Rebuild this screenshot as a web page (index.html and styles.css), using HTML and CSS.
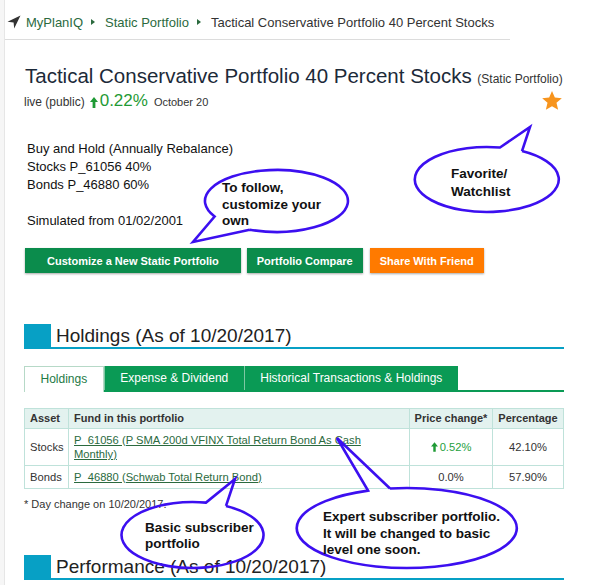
FILE: index.html
```html
<!DOCTYPE html>
<html lang="en">
<head>
<meta charset="utf-8">
<title>Tactical Conservative Portfolio 40 Percent Stocks</title>
<link rel="stylesheet" href="styles.css">
</head>
<body>
<div class="page">
  <nav class="crumbs">
    <svg class="crumb-icon" width="14" height="14" viewBox="0 0 14 14"><polygon points="13.5,0.5 0.5,6.8 6.6,7.4 7.2,13.5" fill="#333"/></svg>
    <a class="crumb-link" href="#">MyPlanIQ</a>
    <span class="sep"></span>
    <a class="crumb-link" href="#">Static Portfolio</a>
    <span class="sep"></span>
    <span class="crumb-current">Tactical Conservative Portfolio 40 Percent Stocks</span>
  </nav>

  <main class="content">
    <header class="title-block">
      <h1 class="title">Tactical Conservative Portfolio 40 Percent Stocks <small class="title-kind">(Static Portfolio)</small></h1>
      <div class="subline">
        <div class="meta">
          <span class="status">live (public)</span>
          <svg class="up-arrow" width="8" height="11" viewBox="0 0 8 11"><path d="M4 0 L8 5 H5.4 V11 H2.6 V5 H0 Z" fill="#1f9a35"/></svg>
          <span class="gain">0.22%</span>
          <span class="date">October 20</span>
        </div>
        <svg class="star" width="22" height="22" viewBox="0 0 24 24"><path d="M12 1.2l3.1 7 7.6.7-5.8 5.1 1.8 7.5L12 17.6l-6.7 3.9 1.8-7.5-5.8-5.1 7.6-.7z" fill="#f7941d"/></svg>
      </div>
    </header>

    <div class="summary">
      <p>Buy and Hold (Annually Rebalance)<br>Stocks P_61056 40%<br>Bonds P_46880 60%</p>
      <p class="simulated">Simulated from 01/02/2001</p>
    </div>

    <div class="actions">
      <button class="btn btn-green btn-customize">Customize a New Static Portfolio</button>
      <button class="btn btn-green btn-compare">Portfolio Compare</button>
      <button class="btn btn-orange btn-share">Share With Friend</button>
    </div>

    <section class="section holdings">
      <h2 class="sec-head"><span class="sec-sq"></span><span class="sec-title">Holdings (As of 10/20/2017)</span></h2>
      <div class="tabs">
        <span class="tab tab-active">Holdings</span>
        <span class="tab">Expense &amp; Dividend</span>
        <span class="tab">Historical Transactions &amp; Holdings</span>
      </div>
      <table class="hold-table">
        <colgroup><col class="c-asset"><col class="c-fund"><col class="c-price"><col class="c-pct"></colgroup>
        <thead>
          <tr><th class="left">Asset</th><th class="left">Fund in this portfolio</th><th>Price change*</th><th>Percentage</th></tr>
        </thead>
        <tbody>
          <tr>
            <td>Stocks</td>
            <td class="fund"><a href="#">P_61056 (P SMA 200d VFINX Total Return Bond As Cash Monthly)</a></td>
            <td class="num up"><svg class="small-arrow" width="7" height="10" viewBox="0 0 8 11"><path d="M4 0 L8 5 H5.4 V11 H2.6 V5 H0 Z" fill="#1f9a35"/></svg>0.52%</td>
            <td class="num">42.10%</td>
          </tr>
          <tr>
            <td>Bonds</td>
            <td class="fund"><a href="#">P_46880 (Schwab Total Return Bond)</a></td>
            <td class="num">0.0%</td>
            <td class="num">57.90%</td>
          </tr>
        </tbody>
      </table>
      <p class="footnote">* Day change on 10/20/2017.</p>
    </section>

    <section class="section performance">
      <h2 class="sec-head"><span class="sec-sq"></span><span class="sec-title">Performance (As of 10/20/2017)</span></h2>
    </section>
  </main>
</div>

<svg class="annotations" width="602" height="585" viewBox="0 0 602 585">
  <g class="bubble">
    <path d="M249.7 229.7 L193 242 L214.6 216.5 A71.5 31 0 1 1 249.7 229.7"/>
    <path d="M522 151.1 L530 127 L500 147.5 A72 32.5 0 1 0 522 151.1"/>
    <path d="M390 488.5 L337 438 L368 490.6 A110 40 0 1 0 390 488.5"/>
    <path d="M226 505.9 L235 479 L206 502.6 A71 33 0 1 0 226 505.9"/>
  </g>
  <g class="bubble-text">
    <text x="222" y="192">To follow,</text>
    <text x="222" y="208.5">customize your</text>
    <text x="222" y="225">own</text>
    <text x="451" y="178">Favorite/</text>
    <text x="451" y="196">Watchlist</text>
    <text x="323" y="521">Expert subscriber portfolio.</text>
    <text x="323" y="538">It will be changed to basic</text>
    <text x="323" y="554">level one soon.</text>
    <text x="145" y="532">Basic subscriber</text>
    <text x="145" y="548">portfolio</text>
  </g>
</svg>
</body>
</html>
```

FILE: styles.css
```css
html, body {
  margin: 0;
  padding: 0;
}

body {
  background: #f6f6f6;
  font-family: "Liberation Sans", Arial, sans-serif;
  color: #333;
  overflow: hidden;
  position: relative;
}

.page {
  margin-left: 4px;
  background: #fff;
  border-left: 1px solid #e6e6e6;
  min-height: 585px;
  box-sizing: border-box;
}

/* breadcrumb */
.crumbs {
  box-sizing: border-box;
  width: 505px;
  height: 40px;
  padding: 5px 0 0 2px;
  display: flex;
  align-items: center;
  border-bottom: 1px solid #dcdcdc;
  font-size: 13px;
  white-space: nowrap;
}

.crumb-icon {
  margin-right: 5px;
}

.crumb-link {
  color: #2b6a3e;
  text-decoration: none;
}

.crumb-current {
  color: #333;
}

.sep {
  width: 0;
  height: 0;
  margin: 0 10px 0 8px;
  border-top: 3.5px solid transparent;
  border-bottom: 3.5px solid transparent;
  border-left: 4px solid #2b6a3e;
}

/* main content */
.content {
  padding-left: 19px;
  width: 540px;
}

.title-block {
  width: 539px;
}

.title {
  margin: 24px 0 0 0;
  font-size: 20.5px;
  line-height: 24px;
  font-weight: normal;
  color: #1c2a39;
  white-space: nowrap;
  padding-left: 1px;
}

.title-kind {
  font-size: 12px;
  color: #333;
}

.subline {
  margin-top: -1px;
  height: 22px;
  display: flex;
  justify-content: space-between;
  align-items: center;
}

.meta {
  display: flex;
  align-items: baseline;
  white-space: nowrap;
}

.status {
  font-size: 12px;
  color: #333;
}

.up-arrow {
  margin-left: 5px;
  align-self: center;
  position: relative;
  top: 1px;
}

.gain {
  margin-left: 2px;
  font-size: 17px;
  color: #1f9a35;
}

.date {
  margin-left: 6px;
  font-size: 11px;
  color: #333;
}

/* summary */
.summary {
  margin-top: 28px;
  padding-left: 3px;
  font-size: 13px;
  line-height: 18px;
  color: #111;
}

.summary p {
  margin: 0;
}

.summary .simulated {
  margin-top: 18px;
}

/* action buttons */
.actions {
  margin-top: 18px;
  padding-left: 1px;
  display: flex;
  gap: 6px;
}

.btn {
  height: 25px;
  border: none;
  color: #fff;
  font-family: "Liberation Sans", Arial, sans-serif;
  font-weight: bold;
  font-size: 11px;
  box-shadow: 0 1px 2px rgba(0, 0, 0, 0.35);
  cursor: pointer;
}

.btn-green {
  background: #0b8c4c;
}

.btn-orange {
  background: #ff7a00;
}

.btn-customize {
  padding: 0 22px;
}

.btn-compare {
  padding: 0 10px;
}

.btn-share {
  margin-left: 1px;
  padding: 0 10px;
}

/* section header */
.sec-head {
  margin: 51px 0 0 0;
  display: flex;
  align-items: flex-end;
  border-bottom: 2px solid #07a0c5;
  font-weight: normal;
}

.sec-sq {
  width: 27px;
  height: 23px;
  background: #07a0c5;
}

.sec-title {
  margin-left: 5px;
  font-size: 19px;
  line-height: 23px;
  color: #222;
}

.performance .sec-head {
  margin-top: 44px;
}

/* tabs */
.tabs {
  margin-top: 17px;
  display: flex;
  border-bottom: 2px solid #0a9a55;
  height: 24px;
}

.tab {
  padding: 0 15.5px;
  font-size: 12px;
  line-height: 24px;
  background: #0a9a55;
  color: #fff;
  border-left: 1px solid #7fc7a3;
  white-space: nowrap;
}

.tab-active {
  background: #fff;
  color: #1d7a45;
  border: 1px solid #b6d9c7;
  border-bottom: none;
  line-height: 25px;
  height: 25px;
}

/* table */
.hold-table {
  margin-top: 16px;
  width: 539px;
  table-layout: fixed;
  border-collapse: collapse;
  border: 1px solid #bfe2da;
}

.c-asset { width: 44px; }
.c-fund { width: 341px; }
.c-price { width: 83px; }
.c-pct { width: 71px; }

.hold-table th,
.hold-table td {
  border: 1px solid #bfe2da;
}

.hold-table th {
  background: #e3f2ef;
  font-size: 11px;
  line-height: 14px;
  font-weight: bold;
  padding: 2px 4px 3px;
  color: #333;
  text-align: center;
  white-space: nowrap;
}

.hold-table th.left {
  text-align: left;
  padding-left: 5px;
}

.hold-table td {
  font-size: 11.2px;
  line-height: 14.5px;
  padding: 3.5px 5px;
  color: #333;
}

.hold-table td.fund {
  padding-right: 18px;
}

.hold-table td.fund a {
  color: #2b6a3e;
  text-decoration: underline;
}

.hold-table td.num {
  text-align: center;
}

.hold-table td.up {
  color: #26a041;
}

.small-arrow {
  margin-right: 2px;
  position: relative;
  top: 1px;
}

.footnote {
  margin: 8px 0 0 0;
  font-size: 11px;
  line-height: 14px;
  color: #333;
}

/* annotation overlay */
.annotations {
  position: absolute;
  top: 0;
  left: 0;
  pointer-events: none;
}

.bubble path {
  fill: none;
  stroke: #3c0ff0;
  stroke-width: 2.6;
  stroke-linejoin: miter;
}

.bubble-text text {
  font-family: "Liberation Sans", Arial, sans-serif;
  font-weight: bold;
  font-size: 13.5px;
  fill: #111;
}
```
